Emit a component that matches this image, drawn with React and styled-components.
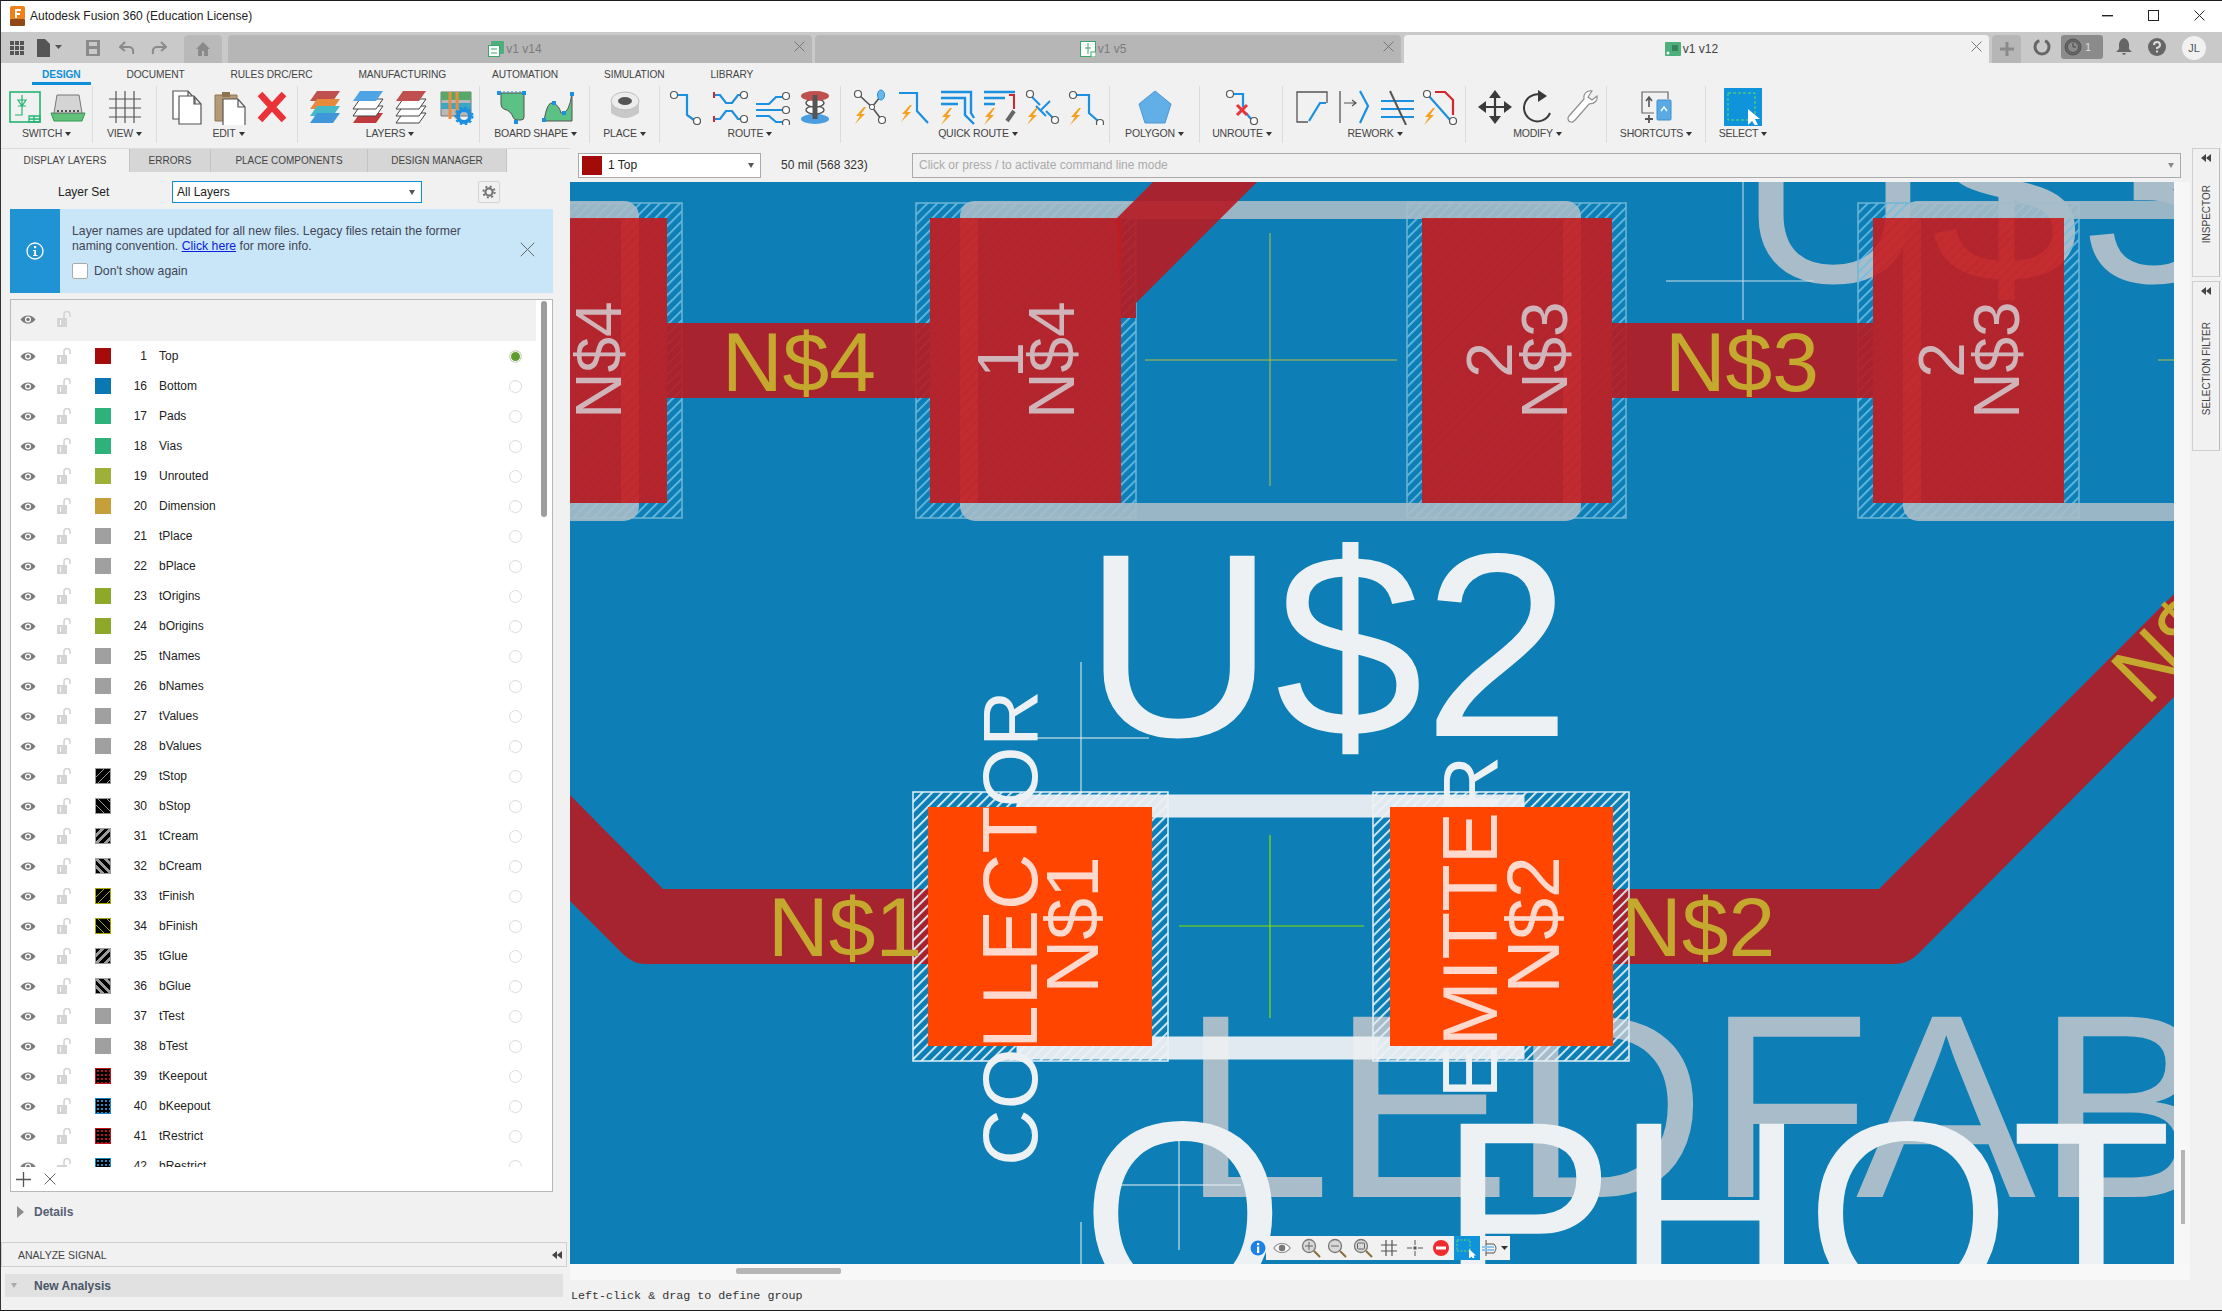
import React from "react";
import styled, { createGlobalStyle } from "styled-components";

const GlobalStyle = createGlobalStyle`
  html, body { margin: 0; padding: 0; background: #f1f1f1; }
  * { box-sizing: border-box; }
`;

const Window = styled.div`
  width: 2222px;
  height: 1311px;
  display: flex;
  flex-direction: column;
  overflow: hidden;
  background: #f1f1f1;
  border-top: 1px solid #1c1c1c;
  border-bottom: 1px solid #1c1c1c;
  border-left: 1px solid #333;
  font-family: "Liberation Sans", Arial, sans-serif;
  color: #333;
`;

const TitleBar = styled.div`
  height: 31px;
  flex: none;
  background: #fff;
  display: flex;
  align-items: center;
  padding: 0 0 2px 9px;
  font-size: 12px;
  color: #222;
`;

const TitleText = styled.span`
  margin-left: 5px;
  flex: 1;
`;

const WinButton = styled.div`
  width: 46px;
  height: 28px;
  display: flex;
  align-items: center;
  justify-content: center;
`;

const DocBar = styled.div`
  height: 31px;
  flex: none;
  background: #c9c9c9;
  display: flex;
  align-items: flex-end;
  position: relative;
`;

const QuickTools = styled.div`
  width: 183px;
  height: 31px;
  display: flex;
  align-items: center;
  padding-left: 8px;
`;

const QuickTool = styled.div`
  width: ${p => p.$w || 33}px;
  display: flex;
  justify-content: center;
`;

const HomeTab = styled.div`
  width: 38px;
  height: 28px;
  border-radius: 4px 4px 0 0;
  background: #b9b9b9;
  margin-right: 6px;
  display: flex;
  align-items: center;
  justify-content: center;
`;

const DocTab = styled.div`
  width: ${p => p.$w}px;
  height: 28px;
  margin-right: 3px;
  padding-right: 10px;
  border-radius: 4px 4px 0 0;
  background: ${p => (p.$active ? "#f1f1f1" : "#b6b6b6")};
  color: ${p => (p.$active ? "#444" : "#7c7c7c")};
  display: flex;
  align-items: center;
  justify-content: center;
  position: relative;
  font-size: 12px;
  gap: 2px;
`;

const TabClose = styled.span`
  position: absolute;
  right: 7px;
  top: 6px;
  display: flex;
`;

const PlusTab = styled(HomeTab)`
  width: 29px;
  margin-right: 0;
  background: #b6b6b6;
`;

const BarIcons = styled.div`
  display: flex;
  align-items: center;
  height: 28px;
  flex: 1;
  padding-left: 9px;
`;

const RefreshIcon = styled.svg`
  margin: 0 0 4px 3px;
`;

const JobBox = styled.div`
  width: 42px;
  height: 24px;
  border-radius: 3px;
  background: #8b8b8b;
  display: flex;
  align-items: center;
  padding-left: 3px;
  gap: 3px;
  color: #ddd;
  font-size: 11px;
  margin: 0 8px 4px 10px;
`;

const BellIcon = styled.svg`
  margin: 0 0 4px 5px;
`;

const HelpIcon = styled.svg`
  margin: 0 0 4px 16px;
`;

const Avatar = styled.div`
  width: 24px;
  height: 24px;
  border-radius: 50%;
  background: #f1f1f1;
  font-size: 11px;
  color: #555;
  display: flex;
  align-items: center;
  justify-content: center;
  margin-left: 16px;
  margin-bottom: 3px;
`;

const Ribbon = styled.div`
  height: 85px;
  flex: none;
  display: flex;
  flex-direction: column;
`;

const RibbonTabs = styled.div`
  height: 23px;
  flex: none;
  display: flex;
  gap: 46px;
  padding-left: 41px;
  align-items: center;
`;

const RibbonTab = styled.div`
  position: relative;
  font-size: 10.2px;
  letter-spacing: -0.1px;
  color: ${p => (p.$active ? "#0f8fd8" : "#444")};
  font-weight: ${p => (p.$active ? 700 : 400)};
  ${p =>
    p.$active &&
    `&:after {
      content: "";
      position: absolute;
      left: -10px;
      right: -11px;
      bottom: -5px;
      height: 3px;
      background: #0f8fd8;
    }`}
`;

const ToolRow = styled.div`
  height: 62px;
  display: flex;
`;

const Group = styled.div`
  width: ${p => p.$w}px;
  flex: none;
  border-right: ${p => (p.$last ? "0" : "1px solid #dcdcdc")};
  margin-bottom: 5px;
  padding-left: ${p => p.$pad || 0}px;
  display: flex;
  flex-direction: column;
  align-items: center;
`;

const GroupIcons = styled.div`
  height: 41px;
  flex: none;
  display: flex;
  align-items: center;
  justify-content: center;
`;

const ToolSlot = styled.div`
  width: ${p => p.$w || 43}px;
  display: flex;
  justify-content: center;
`;

const GroupLabel = styled.div`
  margin-top: 0;
  font-size: 10.5px;
  letter-spacing: -0.2px;
  color: #444;
  white-space: nowrap;
  &:after {
    content: "";
    display: inline-block;
    margin-left: 3px;
    vertical-align: 1px;
    border-left: 3px solid transparent;
    border-right: 3px solid transparent;
    border-top: 4px solid #333;
  }
`;

const SelectBox = styled.div`
  width: 38px;
  height: 38px;
  margin-top: 1px;
  background: #0f93da;
  display: flex;
  align-items: center;
  justify-content: center;
`;

const Main = styled.div`
  flex: 1;
  display: flex;
  min-height: 0;
`;

const LeftColumn = styled.div`
  width: 569px;
  flex: none;
  display: flex;
  flex-direction: column;
`;

const PanelTabs = styled.div`
  height: 24px;
  flex: none;
  display: flex;
  border-top: 1px solid #dcdcdc;
`;

const PanelTab = styled.div`
  width: ${p => p.$w}px;
  background: ${p => (p.$active ? "#f1f1f1" : "#d6d6d6")};
  border-right: 1px solid #c4c4c4;
  font-size: 10px;
  color: #444;
  display: flex;
  align-items: center;
  justify-content: center;
`;

const LayerSetRow = styled.div`
  height: 22px;
  margin-top: 9px;
  flex: none;
  display: flex;
  align-items: center;
  font-size: 12px;
  color: #222;
  padding-left: 57px;
`;

const LayerSetLabel = styled.span`
  width: 114px;
`;

const LayerSelect = styled.div`
  width: 250px;
  height: 22px;
  background: #fff;
  border: 1px solid #0d8ed6;
  display: flex;
  align-items: center;
  justify-content: space-between;
  padding: 0 6px 0 4px;
`;

const Caret = styled.span`
  display: inline-block;
  border-left: 3px solid transparent;
  border-right: 3px solid transparent;
  border-top: 5px solid ${p => p.$color || "#555"};
`;

const GearButton = styled.div`
  width: 22px;
  height: 22px;
  margin-left: 56px;
  border: 1px solid #d4d4d4;
  border-radius: 2px;
  display: flex;
  align-items: center;
  justify-content: center;
`;

const Banner = styled.div`
  height: 84px;
  margin: 6px 0 0 9px;
  width: 543px;
  flex: none;
  background: #c8e6f8;
  display: flex;
  font-size: 12.25px;
  color: #445;
  position: relative;
`;

const BannerSide = styled.div`
  width: 50px;
  background: #1f93d3;
  display: flex;
  align-items: center;
  justify-content: center;
`;

const BannerBody = styled.div`
  padding: 15px 0 0 12px;
  line-height: 15px;
`;

const BannerLink = styled.a`
  color: #0a22e0;
  text-decoration: underline;
`;

const DontShow = styled.label`
  display: flex;
  align-items: center;
  gap: 6px;
  margin-top: 9px;
`;

const FakeCheck = styled.span`
  width: 16px;
  height: 16px;
  background: #fff;
  border: 1px solid #aaa;
  border-radius: 2px;
`;

const BannerClose = styled.span`
  position: absolute;
  right: 18px;
  top: 33px;
  display: flex;
`;

const LayerBox = styled.div`
  margin: 6px 0 0 9px;
  width: 543px;
  height: 893px;
  flex: none;
  border: 1px solid #b8b8b8;
  background: #fff;
  position: relative;
  display: flex;
  flex-direction: column;
`;

const ListHeader = styled.div`
  height: 41px;
  flex: none;
  margin-right: 16px;
  background: #f1f1f1;
  display: flex;
  align-items: center;
  padding: 0 0 3px 9px;
`;

const ListBody = styled.div`
  flex: 1;
  overflow: hidden;
  min-height: 0;
`;

const LayerRow = styled.div`
  height: 30px;
  display: flex;
  align-items: center;
  padding-left: 9px;
  font-size: 12px;
  color: #222;
`;

const EyeSlot = styled.div`
  width: 37px;
  display: flex;
`;

const LockSlot = styled.div`
  width: 38px;
  display: flex;
`;

const swatchBg = {
  hatchUp: "repeating-linear-gradient(135deg, #000 0 5px, #9a9a9a 5px 6px)",
  hatchDown: "repeating-linear-gradient(45deg, #000 0 5px, #9a9a9a 5px 6px)",
  wideUp: "repeating-linear-gradient(135deg, #000 0 3px, #9a9a9a 3px 6px)",
  wideDown: "repeating-linear-gradient(45deg, #000 0 3px, #9a9a9a 3px 6px)",
  yellowUp: "repeating-linear-gradient(135deg, #000 0 5px, #a6a600 5px 6px)",
  yellowDown: "repeating-linear-gradient(45deg, #000 0 5px, #a6a600 5px 6px)",
  dotRed: "radial-gradient(#b5121b 1px, #000 1px) 0 0 / 4px 4px",
  dotBlue: "radial-gradient(#1b8ccc 1px, #000 1px) 0 0 / 4px 4px",
};

const Swatch = styled.div`
  width: 16px;
  height: 16px;
  flex: none;
  background: ${p => swatchBg[p.$fill] || p.$fill};
  border: ${p => (p.$edge ? `1px solid ${p.$edge}` : "0")};
`;

const LayerNum = styled.span`
  width: 36px;
  margin-right: 12px;
  text-align: right;
`;

const LayerName = styled.span`
  flex: 1;
`;

const Radio = styled.span`
  width: 13px;
  height: 13px;
  margin-right: 30px;
  border-radius: 50%;
  border: 1px solid #dcdcdc;
  background: ${p => (p.$on ? "#5f9c2a" : "#fff")};
  ${p => p.$on && "box-shadow: inset 0 0 0 1px #fff;"}
`;

const ListFooter = styled.div`
  height: 24px;
  flex: none;
  display: flex;
  align-items: center;
  gap: 13px;
  padding-left: 5px;
`;

const ListScroll = styled.div`
  position: absolute;
  right: 5px;
  top: 1px;
  width: 6px;
  height: 216px;
  background: #9d9d9d;
  border-radius: 3px;
`;

const DetailsRow = styled.div`
  height: 40px;
  flex: none;
  display: flex;
  align-items: center;
  padding-left: 16px;
  gap: 10px;
  font-size: 12px;
  font-weight: 700;
  color: #566074;
`;

const DetailsArrow = styled.span`
  border-top: 6px solid transparent;
  border-bottom: 6px solid transparent;
  border-left: 7px solid #8d8d8d;
`;

const AnalyzeHeader = styled.div`
  height: 25px;
  margin-top: 10px;
  flex: none;
  border: 1px solid #cfcfcf;
  display: flex;
  align-items: center;
  justify-content: space-between;
  padding: 0 4px 0 16px;
  font-size: 10.5px;
  color: #444;
  width: 566px;
`;

const AnalysisRow = styled.div`
  height: 23px;
  margin: 7px 0 0 4px;
  width: 558px;
  flex: none;
  background: #e1e1e1;
  display: flex;
  align-items: center;
  padding-left: 6px;
  gap: 17px;
  font-size: 12px;
  font-weight: 700;
  color: #4a5568;
`;

const Center = styled.div`
  width: 1620px;
  flex: none;
  display: flex;
  flex-direction: column;
`;

const CommandRow = styled.div`
  height: 34px;
  flex: none;
  display: flex;
  align-items: center;
  padding: 0 9px 0 8px;
  font-size: 12px;
`;

const TopLayerSelect = styled.div`
  width: 183px;
  height: 25px;
  background: #fff;
  border: 1px solid #aaa;
  display: flex;
  align-items: center;
  padding: 0 6px 0 3px;
  gap: 6px;
  color: #222;
`;

const TopSwatch = styled.span`
  width: 20px;
  height: 19px;
  background: #a30b0b;
`;

const TopLayerName = styled.span`
  flex: 1;
`;

const GridText = styled.span`
  width: 151px;
  padding-left: 20px;
  white-space: nowrap;
`;

const CommandInput = styled.div`
  flex: 1;
  height: 25px;
  border: 1px solid #aaa;
  display: flex;
  align-items: center;
  justify-content: space-between;
  padding: 0 6px 0 6px;
  color: #aaa;
`;

const CanvasRow = styled.div`
  height: 1082px;
  flex: none;
  display: flex;
  position: relative;
`;

const BoardSvg = styled.svg`
  display: block;
  flex: none;
  text {
    font-family: "Liberation Sans", Arial, sans-serif;
  }
`;

const SideStrip = styled.div`
  flex: 1;
  background: #f7f7f7;
`;

const VScrollThumb = styled.div`
  position: absolute;
  right: 5px;
  top: 968px;
  width: 4px;
  height: 74px;
  background: #b5b5b5;
`;

const CanvasBar = styled.div`
  position: absolute;
  left: 680px;
  top: 1054px;
  height: 24px;
  display: flex;
  align-items: center;
`;

const BarGroup = styled.div`
  display: flex;
  align-items: center;
  height: 24px;
  background: #f1f1f1;
`;

const BarSlot = styled.div`
  width: ${p => p.$w || 26}px;
  display: flex;
  justify-content: center;
`;

const BarSelect = styled(BarSlot)`
  height: 24px;
  align-items: center;
  background: #0f93da;
`;

const HStrip = styled.div`
  height: 16px;
  flex: none;
  background: #f8f8f8;
  position: relative;
`;

const HThumb = styled.div`
  position: absolute;
  left: 166px;
  top: 4px;
  width: 105px;
  height: 6px;
  background: #b5b5b5;
  border-radius: 2px;
`;

const StatusText = styled.div`
  padding: 9px 0 0 1px;
  font-family: "Liberation Mono", monospace;
  font-size: 11.7px;
  color: #333;
`;

const RightRail = styled.div`
  flex: 1;
  display: flex;
  flex-direction: column;
  padding: 0 2px 0 2px;
  gap: 4px;
`;

const RailPanel = styled.div`
  height: ${p => p.$h}px;
  border: 1px solid #cfcfcf;
  border-right: 1px solid #bbb;
  display: flex;
  flex-direction: column;
  align-items: center;
  padding-top: 5px;
`;

const RailText = styled.div`
  writing-mode: vertical-rl;
  transform: rotate(180deg);
  font-size: 10px;
  color: #444;
  margin-top: ${p => p.$mt}px;
`;

const Svg = ({ w = 38, h = 36, children }) => (
  <svg width={w} height={h} viewBox={`0 0 ${w} ${h}`} fill="none">
    {children}
  </svg>
);

const Bolt = ({ x = 0, y = 0 }) => (
  <path transform={`translate(${x} ${y})`} d="M9 0 L1 9 L5 9 L0 17 L10 7 L6 7 L11 0 Z" fill="#f5a01e" />
);
const Node = ({ x, y, r = 3.5 }) => <circle cx={x} cy={y} r={r} fill="#fff" stroke="#555" strokeWidth="1.2" />;
const BL = "#1b8fe0";

const Sheet = ({ x, y, fill = "#fff" }) => (
  <path
    transform={`translate(${x} ${y})`}
    d="M0 0 H15 L22 8 V28 H0 Z M15 0 V8 H22"
    fill={fill}
    stroke="#555"
    strokeWidth="1.2"
  />
);

const Plate = ({ y, fill }) => <path d={`M10 ${y} H33 L26 ${y + 10} H3 Z`} fill={fill} stroke={fill === "#fff" ? "#444" : "none"} />;

const icons = {
  schematic: (
    <Svg>
      <rect x="4" y="3" width="30" height="30" stroke="#22b573" strokeWidth="1.6" />
      <path d="M16 6V16M12 11H20L16 17ZM12 17H20M16 17V26H9" stroke="#22b573" strokeWidth="1.2" />
      <path d="M23 27H34V33H23ZM23 30H34M28 27V33" stroke="#22b573" strokeWidth="1.3" />
    </Svg>
  ),
  board: (
    <Svg>
      <path d="M2 24 H36 L33 32 H5 Z" fill="#62c178" stroke="#2e9a55" />
      <path d="M8 6 H30 L33 24 H5 Z" fill="#d4d4d4" stroke="#777" />
      <path d="M8 22H31" stroke="#555" strokeWidth="2" strokeDasharray="2 2" />
    </Svg>
  ),
  grid: (
    <Svg>
      <path d="M10 2V34M19 2V34M28 2V34M3 10H35M3 19H35M3 28H35" stroke="#555" strokeWidth="1.2" />
    </Svg>
  ),
  copy: (
    <Svg>
      <Sheet x={6} y={2} />
      <Sheet x={12} y={7} />
    </Svg>
  ),
  paste: (
    <Svg>
      <path d="M5 6H27V32H5Z" fill="#b49a76" stroke="#8c7453" />
      <path d="M12 3H20V8H12Z" fill="#8c7453" />
      <Sheet x={13} y={10} />
    </Svg>
  ),
  del: (
    <Svg>
      <path d="M7 5 L31 31 M31 5 L7 31" stroke="#ea3338" strokeWidth="6.5" />
    </Svg>
  ),
  layers1: (
    <Svg>
      <Plate y={2} fill="#c0504d" />
      <Plate y={10} fill="#e88a3c" />
      <Plate y={17} fill="#45b9c8" />
      <Plate y={24} fill="#3f96d9" />
    </Svg>
  ),
  layers2: (
    <Svg>
      <Plate y={24} fill="#c0393c" />
      <Plate y={17} fill="#fff" />
      <Plate y={10} fill="#fff" />
      <Plate y={2} fill="#4ea4e4" />
    </Svg>
  ),
  layers3: (
    <Svg>
      <Plate y={24} fill="#fff" />
      <Plate y={17} fill="#fff" />
      <Plate y={10} fill="#fff" />
      <Plate y={2} fill="#c0504d" />
    </Svg>
  ),
  layers4: (
    <Svg>
      <path d="M5 3H35V27H5Z" fill="#b8b8b8" stroke="#777" />
      <path d="M5 3H35V11H5Z" fill="#55a868" />
      <path d="M5 14H35V20H5Z" fill="#3aa8c4" />
      <path d="M14 3V30M21 3V30" stroke="#ee8b3c" strokeWidth="3" />
      <circle cx="28" cy="27" r="6" fill="none" stroke="#1b8fe0" strokeWidth="4" />
      <circle cx="28" cy="27" r="8.5" stroke="#1b8fe0" strokeWidth="2" strokeDasharray="2.5 2.5" />
    </Svg>
  ),
  shape1: (
    <Svg>
      <path d="M7 4H30V28Q30 31 27 31H23Q20 31 19 28 Q17 22 10 20 Q7 19 7 15Z" fill="#5cc184" stroke="#555" />
      <path d="M5 3H30" stroke="#1b8fe0" strokeWidth="1" strokeDasharray="2 2" />
      <rect x="3" y="2" width="4" height="4" fill="#1b8fe0" />
      <rect x="28" y="2" width="4" height="4" fill="#1b8fe0" />
      <rect x="20" y="31" width="4" height="4" fill="#1b8fe0" />
    </Svg>
  ),
  shape2: (
    <Svg>
      <path d="M5 32 Q8 12 14 14 Q20 16 22 24 Q30 26 33 4 V32Z" fill="#5cc184" stroke="#555" />
      <rect x="3" y="29" width="4" height="4" fill="#1b8fe0" />
      <rect x="13" y="12" width="4" height="4" fill="#1b8fe0" />
      <rect x="23" y="22" width="4" height="4" fill="#1b8fe0" />
      <rect x="31" y="3" width="4" height="4" fill="#1b8fe0" />
    </Svg>
  ),
  via: (
    <Svg>
      <path d="M5 12V24Q19 34 33 24V12Z" fill="#c8c8c8" />
      <ellipse cx="19" cy="12" rx="14" ry="9" fill="#ececec" stroke="#bbb" />
      <ellipse cx="19" cy="12" rx="7" ry="4" fill="#555" />
    </Svg>
  ),
  route: (
    <Svg>
      <path d="M11 6H20V26L27 31" stroke={BL} strokeWidth="2.2" />
      <Node x={7} y={6} />
      <Node x={30} y={32} />
    </Svg>
  ),
  diff: (
    <Svg>
      <path d="M4 6H10L16 14H22L28 6H34M4 30H10L16 22H22L28 30H34" stroke={BL} strokeWidth="2.2" />
      <path d="M4 3V9M4 27V33" stroke="#d0282d" strokeWidth="2" />
      <Node x={34} y={6} />
      <Node x={34} y={30} />
    </Svg>
  ),
  multi: (
    <Svg>
      <path d="M3 15H16L23 8H30M3 21H30M3 27H16L23 33H30" stroke={BL} strokeWidth="2.2" />
      <Node x={33} y={7} />
      <Node x={33} y={21} />
      <Node x={33} y={34} />
    </Svg>
  ),
  viaStack: (
    <Svg>
      <ellipse cx="19" cy="30" rx="14" ry="5" fill="#4a9ddf" />
      <ellipse cx="19" cy="21" rx="9" ry="4" fill="#fff" stroke="#555" strokeWidth="1.5" />
      <ellipse cx="19" cy="14" rx="9" ry="4" fill="#fff" stroke="#555" strokeWidth="1.5" />
      <ellipse cx="19" cy="7" rx="14" ry="5" fill="#c0504d" />
      <path d="M19 6V30" stroke="#555" strokeWidth="5" />
    </Svg>
  ),
  quick1: (
    <Svg>
      <path d="M7 6L20 18L28 8M20 18L29 30" stroke="#555" strokeWidth="1.6" />
      <Node x={6} y={5} />
      <ellipse cx="29" cy="6" rx="3.5" ry="5" fill="#6cb7ea" stroke="#1b8fe0" />
      <Node x={30} y={31} />
      <circle cx="20" cy="18" r="2.6" fill="#fff" stroke="#555" />
      <Bolt x={3} y={18} />
    </Svg>
  ),
  quick2: (
    <Svg>
      <path d="M4 4H22V22L33 34" stroke={BL} strokeWidth="2.2" />
      <Bolt x={6} y={16} />
    </Svg>
  ),
  quick3: (
    <Svg>
      <path d="M3 3H33V24L36 29M3 9H27V26L36 35M3 15H20" stroke={BL} strokeWidth="2.4" />
      <Bolt x={3} y={19} />
    </Svg>
  ),
  quick4: (
    <Svg>
      <path d="M3 3H34M3 9H24M3 15H14" stroke={BL} strokeWidth="2.4" />
      <path d="M28 6H33V20" stroke="#d0282d" strokeWidth="2" />
      <path d="M33 22L26 32" stroke="#666" strokeWidth="4" />
      <Bolt x={3} y={19} />
    </Svg>
  ),
  quick5: (
    <Svg>
      <path d="M6 6L16 16M22 22L30 30M16 22L26 12M12 17L22 27" stroke={BL} strokeWidth="2" />
      <Node x={6} y={5} />
      <Node x={31} y={31} />
      <Bolt x={3} y={19} />
    </Svg>
  ),
  quick6: (
    <Svg>
      <path d="M9 6H22V24L31 32" stroke={BL} strokeWidth="2.2" />
      <Node x={6} y={6} />
      <Node x={33} y={34} />
      <Bolt x={3} y={19} />
    </Svg>
  ),
  polygon: (
    <Svg>
      <path d="M19 2L35 15L29 34H9L3 15Z" fill="#62aee6" stroke="#4a97d4" />
    </Svg>
  ),
  unroute: (
    <Svg>
      <path d="M10 5H20V18M23 24L28 30" stroke={BL} strokeWidth="2.2" />
      <Node x={7} y={5} />
      <Node x={31} y={32} />
      <path d="M14 16L24 26M24 16L14 26" stroke="#ea3338" strokeWidth="3" />
    </Svg>
  ),
  rework1: (
    <Svg>
      <path d="M35 14V3H5V33H16" stroke="#555" strokeWidth="1.3" />
      <path d="M17 32L28 14H34" stroke={BL} strokeWidth="2.2" />
    </Svg>
  ),
  rework2: (
    <Svg>
      <path d="M5 2V34" stroke="#555" strokeWidth="1.3" />
      <path d="M9 14H20M17 11L21 14L17 17" stroke="#555" strokeWidth="1.2" />
      <path d="M25 2L33 17L25 34" stroke={BL} strokeWidth="2.2" />
    </Svg>
  ),
  rework3: (
    <Svg>
      <path d="M3 12H36M3 20H36M3 28H36" stroke={BL} strokeWidth="2.2" />
      <path d="M12 2L28 36" stroke="#555" strokeWidth="2" />
    </Svg>
  ),
  rework4: (
    <Svg>
      <path d="M14 3H24L32 11V26" stroke="#d0282d" strokeWidth="2.2" />
      <path d="M7 6L30 32" stroke={BL} strokeWidth="2.2" />
      <Node x={6} y={5} />
      <Node x={32} y={32} />
      <Bolt x={3} y={19} />
    </Svg>
  ),
  move: (
    <Svg>
      <path d="M19 4V32M5 18H33" stroke="#3a3a3a" strokeWidth="2.2" />
      <path d="M19 1L25 9H13ZM19 35L13 27H25ZM2 18L10 12V24ZM36 18L28 24V12Z" fill="#3a3a3a" />
    </Svg>
  ),
  rotate: (
    <Svg>
      <path d="M25 7A13.5 13.5 0 1 0 31 24" stroke="#3a3a3a" strokeWidth="2" />
      <path d="M19 1L28 7L19 13Z" fill="#3a3a3a" />
    </Svg>
  ),
  wrench: (
    <Svg>
      <path
        d="M30 2C26 1 21 4 22 10L7 27C5 29 6 33 9 33C11 34 12 32 14 30L27 15C33 15 36 11 35 7L30 11L26 8Z"
        stroke="#8d8d8d"
        strokeWidth="1.2"
        fill="#fff"
      />
    </Svg>
  ),
  shortcuts: (
    <Svg>
      <path d="M5 13V3H31V10M5 13V24H17" stroke="#666" strokeWidth="1.2" />
      <path d="M12 8V18M9 12L12 8L15 12" stroke="#555" strokeWidth="1.6" />
      <path d="M12 26V34M8 30H16" stroke="#555" strokeWidth="1.8" />
      <rect x="20" y="11" width="14" height="20" rx="1" fill="#5aaae6" stroke="#3d8fca" />
      <path d="M24 22L27 18L30 22" stroke="#fff" strokeWidth="1.4" />
    </Svg>
  ),
  select: (
    <Svg>
      <rect x="4" y="4" width="27" height="27" stroke="#66e05a" strokeWidth="1" strokeDasharray="3 2" />
      <path d="M24 20V36L28 32L32 38L34 36L31 30L36 30Z" fill="#fff" />
    </Svg>
  ),
};

const ribbonGroups = [
  { label: "SWITCH", w: 92, tools: ["schematic", "board"] },
  { label: "VIEW", w: 64, tools: ["grid"] },
  { label: "EDIT", w: 141, pad: 3, tools: ["copy", "paste", "del"] },
  { label: "LAYERS", w: 182, pad: 3, tools: ["layers1", "layers2", "layers3", "layers4"] },
  { label: "BOARD SHAPE", w: 110, slot: 45, pad: 2, tools: ["shape1", "shape2"] },
  { label: "PLACE", w: 70, tools: ["via"] },
  { label: "ROUTE", w: 181, tools: ["route", "diff", "multi", "viaStack"] },
  { label: "QUICK ROUTE", w: 269, pad: 6, tools: ["quick1", "quick2", "quick3", "quick4", "quick5", "quick6"] },
  { label: "POLYGON", w: 90, tools: ["polygon"] },
  { label: "UNROUTE", w: 83, pad: 2, tools: ["unroute"] },
  { label: "REWORK", w: 183, pad: 2, tools: ["rework1", "rework2", "rework3", "rework4"] },
  { label: "MODIFY", w: 141, pad: 3, tools: ["move", "rotate", "wrench"] },
  { label: "SHORTCUTS", w: 99, tools: ["shortcuts"] },
];

const ribbonTabs = ["DESIGN", "DOCUMENT", "RULES DRC/ERC", "MANUFACTURING", "AUTOMATION", "SIMULATION", "LIBRARY"];

const layers = [
  [1, "Top", "#a50b0b"],
  [16, "Bottom", "#0b78b4"],
  [17, "Pads", "#2fb27a"],
  [18, "Vias", "#2fb27a"],
  [19, "Unrouted", "#9fb03a"],
  [20, "Dimension", "#c49f3a"],
  [21, "tPlace", "#a0a0a0"],
  [22, "bPlace", "#a0a0a0"],
  [23, "tOrigins", "#8ea82a"],
  [24, "bOrigins", "#8ea82a"],
  [25, "tNames", "#a0a0a0"],
  [26, "bNames", "#a0a0a0"],
  [27, "tValues", "#a0a0a0"],
  [28, "bValues", "#a0a0a0"],
  [29, "tStop", "hatchUp", "#9a9a9a"],
  [30, "bStop", "hatchDown", "#9a9a9a"],
  [31, "tCream", "wideUp", "#9a9a9a"],
  [32, "bCream", "wideDown", "#9a9a9a"],
  [33, "tFinish", "yellowUp", "#a6a600"],
  [34, "bFinish", "yellowDown", "#a6a600"],
  [35, "tGlue", "wideUp", "#9a9a9a"],
  [36, "bGlue", "wideDown", "#9a9a9a"],
  [37, "tTest", "#a0a0a0"],
  [38, "bTest", "#a0a0a0"],
  [39, "tKeepout", "dotRed", "#c4121b"],
  [40, "bKeepout", "dotBlue", "#1088c8"],
  [41, "tRestrict", "dotRed", "#c4121b"],
  [42, "bRestrict", "dotBlue", "#1088c8"],
];

const Eye = () => (
  <svg width="16" height="11" viewBox="0 0 16 11">
    <path d="M0.5 5.5C4 0 12 0 15.5 5.5C12 11 4 11 0.5 5.5Z" fill="#7b7b7b" />
    <circle cx="8" cy="5.5" r="3" fill="#fff" />
    <circle cx="8" cy="5.5" r="1.8" fill="#7b7b7b" />
  </svg>
);

const Lock = () => (
  <svg width="14" height="16" viewBox="0 0 14 16">
    <rect x="0" y="7" width="10" height="9" fill="#d4d4d4" />
    <path d="M7 7V3.5A2.8 2.8 0 0 1 13 3.5V6" fill="none" stroke="#d4d4d4" strokeWidth="1.6" />
    <rect x="3" y="9" width="1" height="5" fill="#fff" />
  </svg>
);

const CloseX = ({ size = 10, color = "#777" }) => (
  <svg width={size} height={size} viewBox="0 0 10 10">
    <path d="M0.5 0.5L9.5 9.5M9.5 0.5L0.5 9.5" stroke={color} strokeWidth={10 / size} />
  </svg>
);

const Arrows = () => (
  <svg width="10" height="8" viewBox="0 0 10 8">
    <path d="M5 0V8L0 4ZM10 0V8L5 4Z" fill="#444" />
  </svg>
);

const Gear = () => (
  <svg width="14" height="14" viewBox="0 0 14 14">
    <circle cx="7" cy="7" r="3.6" fill="none" stroke="#777" strokeWidth="2.2" />
    <circle cx="7" cy="7" r="5.6" fill="none" stroke="#777" strokeWidth="2" strokeDasharray="2 2.4" />
  </svg>
);

const Zoomer = ({ children }) => (
  <svg width="20" height="20" viewBox="0 0 20 20" fill="none">
    <circle cx="8" cy="8" r="6.5" fill="#d8d8d8" stroke="#777" strokeWidth="1.3" />
    <path d="M13 13L19 19" stroke="#8a6d3b" strokeWidth="2" />
    {children}
  </svg>
);

const Hatch = ({ o, i, pat, edge }) => (
  <g>
    <path
      fillRule="evenodd"
      d={`M${o[0]} ${o[1]}H${o[2]}V${o[3]}H${o[0]}Z M${i[0]} ${i[1]}H${i[2]}V${i[3]}H${i[0]}Z`}
      fill={`url(#${pat})`}
    />
    <rect x={o[0]} y={o[1]} width={o[2] - o[0]} height={o[3] - o[1]} fill="none" stroke={edge} strokeWidth="1.5" />
  </g>
);

const RedPad = ({ x, w }) => (
  <g>
    <rect x={x} y="218" width={w} height="285" fill="#c71c1f" opacity="0.9" />
    <rect x={x} y="218" width={w} height="285" fill="url(#padHatch)" />
  </g>
);

// rotated pad text, reads bottom to top
const Up = ({ x, y, size, fill, children }) => (
  <text transform={`translate(${x} ${y}) rotate(-90)`} textAnchor="middle" fontSize={size} fill={fill}>
    {children}
  </text>
);

// the board's vector font runs a bit wider than Arial
const Big = ({ x, y, len, fill, children }) => (
  <text x={x} y={y} fontSize="262" fill={fill} textLength={len} lengthAdjust="spacingAndGlyphs">
    {children}
  </text>
);

const BLUE = "#0d7fb6";
const GRAY = "#a9bcc9";
const WHITE = "#eef1f3";
const YELLOW = "#c4a92e";
const PINK = "#cfb4ba";
const PEACH = "#ffd9cd";
const TRACE = "#b71a20";

const Board = () => (
  <BoardSvg width="1604" height="1082" viewBox="569 182 1604 1082">
    <defs>
      <pattern id="hatchTop" width="7" height="7" patternUnits="userSpaceOnUse" patternTransform="rotate(45)">
        <rect width="1.6" height="7" fill="#6fbfe4" />
      </pattern>
      <pattern id="hatchWhite" width="7" height="7" patternUnits="userSpaceOnUse" patternTransform="rotate(45)">
        <rect width="1.8" height="7" fill="#dff0f8" />
      </pattern>
      <pattern id="padHatch" width="7" height="7" patternUnits="userSpaceOnUse" patternTransform="rotate(45)">
        <rect width="1.2" height="7" fill="#a5222b" opacity="0.35" />
      </pattern>
    </defs>

    <rect x="560" y="182" width="1620" height="1082" fill={BLUE} />

    <Big x={1180} y={1197} len={1035} fill={GRAY}>LEDFAB</Big>
    <Big x={1737} y={282} len={490} fill={GRAY}>U$3</Big>

    {/* stop masks */}
    <Hatch o={[555, 203, 681, 518]} i={[555, 218, 666, 503]} pat="hatchTop" edge="#6fb5d4" />
    <Hatch o={[915, 203, 1135, 518]} i={[929, 218, 1120, 503]} pat="hatchTop" edge="#6fb5d4" />
    <Hatch o={[1406, 203, 1625, 518]} i={[1421, 218, 1611, 503]} pat="hatchTop" edge="#6fb5d4" />
    <Hatch o={[1857, 203, 2078, 518]} i={[1872, 218, 2063, 503]} pat="hatchTop" edge="#6fb5d4" />

    {/* tPlace frames of the upper parts */}
    <g stroke={GRAY} strokeWidth="18" fill="none" opacity="0.9">
      <rect x="400" y="210" width="229" height="302" rx="6" />
      <rect x="968" y="210" width="603" height="302" rx="6" />
      <rect x="1911" y="210" width="400" height="302" rx="6" />
    </g>

    {/* traces */}
    <g fill={TRACE} opacity="0.9">
      <rect x="666" y="323" width="263" height="75" />
      <rect x="1611" y="323" width="261" height="75" />
      <path d="M1116 218L1152 182H1256L1135 303V318H1120Z" />
    </g>
    <path
      d="M560 786L662 889H927V964H645Q632 964 622 954L560 892Z M1612 889H1878L2180 587V690L1917 954Q1907 964 1893 964H1612Z"
      fill="#a6242f"
    />

    <RedPad x={555} w={111} />
    <RedPad x={929} w={191} />
    <RedPad x={1421} w={190} />
    <RedPad x={1872} w={191} />

    <Up x={620} y={360} size={64} fill={PINK}>N$4</Up>
    <Up x={1022} y={360} size={64} fill={PINK}>1</Up>
    <Up x={1073} y={360} size={64} fill={PINK}>N$4</Up>
    <Up x={1511} y={360} size={64} fill={PINK}>2</Up>
    <Up x={1566} y={360} size={64} fill={PINK}>N$3</Up>
    <Up x={1963} y={360} size={64} fill={PINK}>2</Up>
    <Up x={2018} y={360} size={64} fill={PINK}>N$3</Up>

    <text x="798" y="391" fontSize="84" textAnchor="middle" fill={YELLOW}>N$4</text>
    <text x="1741" y="391" fontSize="84" textAnchor="middle" fill={YELLOW}>N$3</text>

    {/* origins */}
    <path d="M1269 233V486M1144 360H1396" stroke="#b5c23a" strokeWidth="1" />
    <path d="M2157 360H2174" stroke="#b5c23a" strokeWidth="1" />
    <path d="M1742 182V320M1665 281H1812" stroke="#cfdde6" strokeWidth="1" />

    {/* lower part */}
    <Hatch o={[912, 792, 1167, 1061]} i={[927, 807, 1151, 1046]} pat="hatchWhite" edge="#e4f0f6" />
    <Hatch o={[1372, 792, 1628, 1061]} i={[1389, 807, 1612, 1046]} pat="hatchWhite" edge="#e4f0f6" />
    <path d="M1027 806V1048H1512V806Z" fill="none" stroke={WHITE} strokeWidth="23" opacity="0.94" />
    <rect x="927" y="807" width="224" height="239" fill="#ff4500" />
    <rect x="1389" y="807" width="223" height="239" fill="#ff4500" />

    <path d="M1269 835V1018M1178 926H1363" stroke="#86e000" strokeWidth="1.2" />
    <path d="M1080 662V795M1000 738H1148" stroke={WHITE} strokeWidth="1" />
    <path d="M1080 1222V1264M1178 1135V1250M1100 1185H1240" stroke={WHITE} strokeWidth="1" />

    <text x="767" y="956" fontSize="84" fill={YELLOW}>N$1</text>
    <text x="1620" y="956" fontSize="84" fill={YELLOW}>N$2</text>
    <text transform="translate(2146 707) rotate(-45)" fontSize="84" fill={YELLOW}>N$</text>

    <Big x={1082} y={736} len={488} fill={WHITE}>U$2</Big>

    <clipPath id="outsidePads">
      <path d="M560 182H2180V1264H560Z M927 807V1046H1151V807Z M1389 807V1046H1612V807Z" clipRule="evenodd" />
    </clipPath>
    <clipPath id="insidePads">
      <path d="M927 807H1151V1046H927Z M1389 807H1612V1046H1389Z" />
    </clipPath>
    <g clipPath="url(#outsidePads)">
      <Up x={1036} y={928} size={78} fill={WHITE}>COLLECTOR</Up>
      <Up x={1496} y={927} size={78} fill={WHITE}>EMITTER</Up>
    </g>
    <g clipPath="url(#insidePads)">
      <Up x={1036} y={928} size={78} fill={PEACH}>COLLECTOR</Up>
      <Up x={1496} y={927} size={78} fill={PEACH}>EMITTER</Up>
    </g>
    <Up x={1097} y={925} size={75} fill={PEACH}>N$1</Up>
    <Up x={1558} y={925} size={75} fill={PEACH}>N$2</Up>

    <text x="1080" y="1304" fontSize="262" fill={WHITE}>O</text>
    <Big x={1438} y={1304} len={733} fill={WHITE}>PHOT</Big>
  </BoardSvg>
);

const LogoF = () => (
  <svg width="15" height="20" viewBox="0 0 15 20">
    <rect width="15" height="14" rx="2" fill="#f0801a" />
    <rect y="13" width="15" height="7" rx="1" fill="#8f4a16" />
    <path d="M5 3H11V5H7V7H10V9H7V12H5Z" fill="#fff" />
  </svg>
);

export default function App() {
  return (
    <Window>
      <GlobalStyle />
      <TitleBar>
        <LogoF />
        <TitleText>Autodesk Fusion 360 (Education License)</TitleText>
        <WinButton>
          <svg width="11" height="2"><rect width="11" height="1.4" fill="#222" /></svg>
        </WinButton>
        <WinButton>
          <svg width="11" height="11"><rect x="0.5" y="0.5" width="10" height="10" fill="none" stroke="#222" /></svg>
        </WinButton>
        <WinButton>
          <CloseX size={11} color="#222" />
        </WinButton>
      </TitleBar>

      <DocBar>
        <QuickTools>
          <QuickTool $w={16}>
            <svg width="14" height="14" viewBox="0 0 14 14">
              <path d="M0 0H4V4H0ZM5 0H9V4H5ZM10 0H14V4H10ZM0 5H4V9H0ZM5 5H9V9H5ZM10 5H14V9H10ZM0 10H4V14H0ZM5 10H9V14H5ZM10 10H14V14H10Z" fill="#555" />
            </svg>
          </QuickTool>
          <QuickTool $w={50}>
            <svg width="26" height="18" viewBox="0 0 26 18">
              <path d="M0 0H8L13 5V18H0Z" fill="#555" />
              <path d="M18 6H25L21.5 10Z" fill="#555" />
            </svg>
          </QuickTool>
          <QuickTool $w={36}>
            <svg width="14" height="16" viewBox="0 0 14 16">
              <path d="M0 0H14V16H0ZM3 2V6H11V2ZM3 9V14H11V9Z" fill="#8a8a8a" fillRule="evenodd" />
            </svg>
          </QuickTool>
          <QuickTool $w={32}>
            <svg width="16" height="14" viewBox="0 0 16 14">
              <path d="M6 1L1 6L6 10M1 6H10Q15 6 14 13" stroke="#8a8a8a" strokeWidth="2" fill="none" />
            </svg>
          </QuickTool>
          <QuickTool $w={32}>
            <svg width="16" height="14" viewBox="0 0 16 14">
              <path d="M10 1L15 6L10 10M15 6H6Q1 6 2 13" stroke="#8a8a8a" strokeWidth="2" fill="none" />
            </svg>
          </QuickTool>
        </QuickTools>
        <HomeTab>
          <svg width="14" height="14" viewBox="0 0 14 14">
            <path d="M7 0L14 7H12V14H8V9H6V14H2V7H0Z" fill="#8a8a8a" />
          </svg>
        </HomeTab>
        <DocTab $w={584}>
          <svg width="16" height="16" viewBox="0 0 16 16">
            <rect x="3" y="0" width="13" height="13" rx="1" fill="#4caf7c" />
            <rect x="0.5" y="4.5" width="11" height="11" fill="#fff" stroke="#3aa86c" />
            <path d="M3 8H9M3 12H9" stroke="#3aa86c" />
          </svg>
          v1 v14
          <TabClose><CloseX size={11} /></TabClose>
        </DocTab>
        <DocTab $w={586}>
          <svg width="16" height="16" viewBox="0 0 16 16">
            <rect x="0.5" y="0.5" width="15" height="15" fill="#fff" stroke="#3aa86c" />
            <path d="M8 2V13M5 7H11" stroke="#3aa86c" />
            <rect x="11" y="11" width="5" height="5" fill="#fff" stroke="#3aa86c" />
          </svg>
          v1 v5
          <TabClose><CloseX size={11} /></TabClose>
        </DocTab>
        <DocTab $w={585} $active>
          <svg width="16" height="16" viewBox="0 0 16 16">
            <rect x="0" y="1" width="16" height="14" rx="1" fill="#4caf7c" />
            <rect x="7" y="4" width="6" height="6" fill="#35835a" />
            <circle cx="3" cy="12" r="1.5" fill="#fff" />
          </svg>
          v1 v12
          <TabClose><CloseX size={11} /></TabClose>
        </DocTab>
        <PlusTab>
          <svg width="14" height="14" viewBox="0 0 14 14"><path d="M7 0V14M0 7H14" stroke="#8a8a8a" strokeWidth="3" /></svg>
        </PlusTab>
        <BarIcons>
          <RefreshIcon width="18" height="18" viewBox="0 0 18 18">
            <circle cx="9" cy="9" r="7" fill="none" stroke="#666" strokeWidth="3" strokeDasharray="30 6" />
          </RefreshIcon>
          <JobBox>
            <svg width="18" height="18" viewBox="0 0 18 18">
              <circle cx="9" cy="9" r="8" fill="#666" stroke="#555" />
              <circle cx="9" cy="9" r="5.5" fill="#8b8b8b" stroke="#555" />
              <path d="M9 5V9H12" stroke="#444" fill="none" />
            </svg>
            1
          </JobBox>
          <BellIcon width="16" height="18" viewBox="0 0 16 18">
            <path d="M8 0Q12 1 13 6V11L16 14H0L3 11V6Q4 1 8 0ZM6 15H10Q8 19 6 15Z" fill="#666" />
          </BellIcon>
          <HelpIcon width="18" height="18" viewBox="0 0 18 18">
            <circle cx="9" cy="9" r="9" fill="#666" />
            <path d="M6 7Q6 4 9 4Q12 4 12 7Q12 9 9 10V11" stroke="#ddd" strokeWidth="2" fill="none" />
            <rect x="8" y="12.5" width="2" height="2" fill="#ddd" />
          </HelpIcon>
          <Avatar>JL</Avatar>
        </BarIcons>
      </DocBar>

      <Ribbon>
        <RibbonTabs>
          {ribbonTabs.map((t, i) => (
            <RibbonTab key={t} $active={i === 0}>{t}</RibbonTab>
          ))}
        </RibbonTabs>
        <ToolRow>
          {ribbonGroups.map(g => (
            <Group key={g.label} $w={g.w} $pad={g.pad}>
              <GroupIcons>
                {g.tools.map(t => (
                  <ToolSlot key={t} $w={g.slot}>{icons[t]}</ToolSlot>
                ))}
              </GroupIcons>
              <GroupLabel>{g.label}</GroupLabel>
            </Group>
          ))}
          <Group $w={74} $last>
            <GroupIcons>
              <SelectBox>{icons.select}</SelectBox>
            </GroupIcons>
            <GroupLabel>SELECT</GroupLabel>
          </Group>
        </ToolRow>
      </Ribbon>

      <Main>
        <LeftColumn>
          <PanelTabs>
            <PanelTab $w={129} $active>DISPLAY LAYERS</PanelTab>
            <PanelTab $w={81}>ERRORS</PanelTab>
            <PanelTab $w={157}>PLACE COMPONENTS</PanelTab>
            <PanelTab $w={139}>DESIGN MANAGER</PanelTab>
          </PanelTabs>
          <LayerSetRow>
            <LayerSetLabel>Layer Set</LayerSetLabel>
            <LayerSelect>
              All Layers
              <Caret />
            </LayerSelect>
            <GearButton><Gear /></GearButton>
          </LayerSetRow>
          <Banner>
            <BannerSide>
              <svg width="18" height="18" viewBox="0 0 18 18">
                <circle cx="9" cy="9" r="8" fill="none" stroke="#fff" strokeWidth="1.3" />
                <rect x="8" y="4" width="2.2" height="2.2" fill="#fff" />
                <path d="M7 8H10V13H11.5V14H7V13H8.2V9H7Z" fill="#fff" />
              </svg>
            </BannerSide>
            <BannerBody>
              Layer names are updated for all new files. Legacy files retain the former
              <br />
              naming convention. <BannerLink>Click here</BannerLink> for more info.
              <DontShow>
                <FakeCheck />
                Don't show again
              </DontShow>
            </BannerBody>
            <BannerClose><CloseX size={15} color="#666" /></BannerClose>
          </Banner>
          <LayerBox>
            <ListHeader>
              <EyeSlot><Eye /></EyeSlot>
              <LockSlot><Lock /></LockSlot>
            </ListHeader>
            <ListBody>
              {layers.map(([num, name, fill, edge]) => (
                <LayerRow key={num}>
                  <EyeSlot><Eye /></EyeSlot>
                  <LockSlot><Lock /></LockSlot>
                  <Swatch $fill={fill} $edge={edge} />
                  <LayerNum>{num}</LayerNum>
                  <LayerName>{name}</LayerName>
                  <Radio $on={num === 1} />
                </LayerRow>
              ))}
            </ListBody>
            <ListFooter>
              <svg width="15" height="15" viewBox="0 0 15 15"><path d="M7.5 0V15M0 7.5H15" stroke="#555" strokeWidth="1.3" /></svg>
              <CloseX size={12} color="#666" />
            </ListFooter>
            <ListScroll />
          </LayerBox>
          <DetailsRow>
            <DetailsArrow />
            Details
          </DetailsRow>
          <AnalyzeHeader>
            ANALYZE SIGNAL
            <Arrows />
          </AnalyzeHeader>
          <AnalysisRow>
            <Caret $color="#aaa" />
            New Analysis
          </AnalysisRow>
        </LeftColumn>

        <Center>
          <CommandRow>
            <TopLayerSelect>
              <TopSwatch />
              <TopLayerName>1 Top</TopLayerName>
              <Caret />
            </TopLayerSelect>
            <GridText>50 mil (568 323)</GridText>
            <CommandInput>
              Click or press / to activate command line mode
              <Caret $color="#888" />
            </CommandInput>
          </CommandRow>
          <CanvasRow>
            <Board />
            <SideStrip />
            <VScrollThumb />
            <CanvasBar>
              <svg width="16" height="16" viewBox="0 0 16 16">
                <circle cx="8" cy="8" r="7.5" fill="#1d82e4" />
                <rect x="7" y="3" width="2.2" height="2.2" fill="#fff" />
                <rect x="7" y="6.5" width="2.2" height="6.5" fill="#fff" />
              </svg>
              <BarGroup>
                <BarSlot $w={32}>
                  <svg width="18" height="12" viewBox="0 0 16 11">
                    <path d="M0.5 5.5C4 0 12 0 15.5 5.5C12 11 4 11 0.5 5.5Z" fill="#fff" stroke="#888" />
                    <circle cx="8" cy="5.5" r="3" fill="#777" />
                  </svg>
                </BarSlot>
                <BarSlot>
                  <Zoomer><path d="M4 8H12M8 4V12" stroke="#666" /></Zoomer>
                </BarSlot>
                <BarSlot>
                  <Zoomer><path d="M4 8H12" stroke="#666" /></Zoomer>
                </BarSlot>
                <BarSlot>
                  <Zoomer><rect x="4.5" y="5" width="7" height="6" rx="1" stroke="#666" /></Zoomer>
                </BarSlot>
                <BarSlot>
                  <svg width="16" height="16" viewBox="0 0 16 16"><path d="M5 0V16M11 0V16M0 5H16M0 11H16" stroke="#555" strokeWidth="1.2" /></svg>
                </BarSlot>
                <BarSlot>
                  <svg width="16" height="16" viewBox="0 0 16 16">
                    <path d="M8 0V5M8 11V16M0 8H5M11 8H16" stroke="#555" />
                    <rect x="6.5" y="6.5" width="3" height="3" fill="#555" />
                  </svg>
                </BarSlot>
                <BarSlot>
                  <svg width="16" height="16" viewBox="0 0 16 16">
                    <circle cx="8" cy="8" r="8" fill="#ee2b2f" />
                    <rect x="3" y="6.5" width="10" height="3" fill="#fff" />
                  </svg>
                </BarSlot>
                <BarSelect>
                  <svg width="22" height="20" viewBox="0 0 22 20" fill="none">
                    <rect x="1" y="2" width="13" height="11" stroke="#66e05a" strokeDasharray="2 1.5" />
                    <path d="M13 11V21L15.5 18.5L18 22L19 21L17.5 17.5L20 17.5Z" fill="#fff" />
                  </svg>
                </BarSelect>
                <BarSlot $w={30}>
                  <svg width="26" height="16" viewBox="0 0 26 16" fill="none">
                    <path d="M4 0V16" stroke="#555" />
                    <path d="M0 7H12M0 10H12" stroke="#8fc4ee" strokeWidth="2" />
                    <path d="M4 4H12Q16 8 12 13H4" stroke="#555" />
                    <path d="M19 6H26L22.5 10Z" fill="#333" />
                  </svg>
                </BarSlot>
              </BarGroup>
            </CanvasBar>
          </CanvasRow>
          <HStrip><HThumb /></HStrip>
          <StatusText>Left-click &amp; drag to define group</StatusText>
        </Center>

        <RightRail>
          <RailPanel $h={129}>
            <Arrows />
            <RailText $mt={23}>INSPECTOR</RailText>
          </RailPanel>
          <RailPanel $h={170}>
            <Arrows />
            <RailText $mt={27}>SELECTION FILTER</RailText>
          </RailPanel>
        </RightRail>
      </Main>
    </Window>
  );
}
